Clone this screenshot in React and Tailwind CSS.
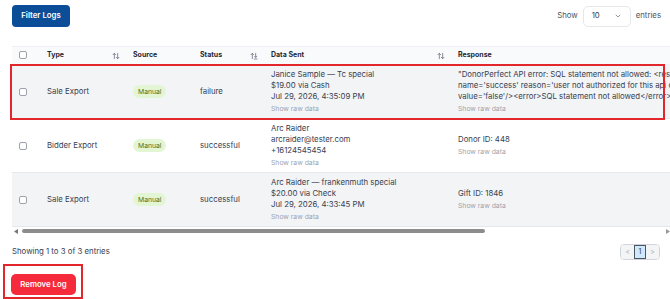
const rows = [
  {
    type: 'Sale Export',
    status: 'failure',
    sent: ['Janice Sample — Tc special', '$19.00 via Cash', 'Jul 29, 2026, 4:35:09 PM'],
    response: [
      '"DonorPerfect API error: SQL statement not allowed: <result><field',
      "name='success' reason='user not authorized for this api call'",
      "value='false'/><error>SQL statement not allowed</error></result>\"",
    ],
    bg: 'bg-[#f3f4f6]',
  },
  {
    type: 'Bidder Export',
    status: 'successful',
    sent: ['Arc Raider', 'arcraider@tester.com', '+16124545454'],
    response: ['Donor ID: 448'],
    bg: 'bg-white',
  },
  {
    type: 'Sale Export',
    status: 'successful',
    sent: ['Arc Raider — frankenmuth special', '$20.00 via Check', 'Jul 29, 2026, 4:33:45 PM'],
    response: ['Gift ID: 1846'],
    bg: 'bg-[#f3f4f6]',
  },
]

function Box() {
  return <span className="inline-block w-[8px] h-[8px] rounded-[2px] border border-[#9ca3af] bg-white align-middle" />
}

function SortIcon({ active }) {
  return (
    <svg width="8" height="8" viewBox="0 0 24 24" fill="none" stroke="#6b7280" strokeWidth="2.4" strokeLinecap="round" strokeLinejoin="round">
      <path d="m3 8 4-4 4 4" />
      <path d="M7 4v16" />
      {active ? (
        <>
          <path d="M17 4v12" />
          <path d="m14 13 3 3 3-3" />
          <path d="M13 21h8" />
        </>
      ) : (
        <>
          <path d="m21 16-4 4-4-4" />
          <path d="M17 20V4" />
        </>
      )}
    </svg>
  )
}

function RawLink() {
  return <p className="text-[6.8px] leading-[11px] text-[#9ca3af] mt-[1px]">Show raw data</p>
}

export default function App() {
  return (
    <div className="w-[670px] h-[299px] bg-white overflow-hidden pt-[5px] pl-3 text-[#374151]" style={{ fontFamily: 'Inter, "Noto Sans", sans-serif' }}>
      <div className="flex items-center justify-between pr-[9px]">
        <button className="h-[22px] w-[58px] rounded-[4px] bg-[#0b4d97] text-white text-[7.8px] font-semibold">Filter Logs</button>
        <div className="flex items-center gap-[5px] text-[7.8px] text-[#4b5563]">
          <span>Show</span>
          <div className="w-[48px] h-[21px] rounded-[5px] border border-[#e5e7eb] flex items-center justify-between px-[8px] text-[#374151]">
            <span>10</span>
            <svg width="8" height="8" viewBox="0 0 24 24" fill="none" stroke="#6b7280" strokeWidth="2.2" strokeLinecap="round" strokeLinejoin="round">
              <path d="m6 9 6 6 6-6" />
            </svg>
          </div>
          <span>entries</span>
        </div>
      </div>

      <div className="relative mt-[19px] w-[658px]">
        <div className="overflow-hidden w-[658px]">
          <table className="border-collapse table-fixed w-[900px] text-[7.8px]">
            <colgroup>
              <col className="w-[26px]" />
              <col className="w-[86px]" />
              <col className="w-[67px]" />
              <col className="w-[71px]" />
              <col className="w-[187px]" />
              <col className="w-[463px]" />
            </colgroup>
            <thead>
              <tr className="h-[18px] bg-[#f9fafb] border-t border-b border-[#eef0f3] text-[7px] font-semibold text-[#1f2937]">
                <th className="pl-[7px] text-left font-normal"><Box /></th>
                <th className="pl-[9px] pr-[4px] text-left">
                  <div className="flex items-center justify-between"><span>Type</span><SortIcon /></div>
                </th>
                <th className="pl-[9px] text-left">Source</th>
                <th className="pl-[9px] pr-[4px] text-left">
                  <div className="flex items-center justify-between"><span>Status</span><SortIcon active /></div>
                </th>
                <th className="pl-[9px] pr-[4px] text-left">
                  <div className="flex items-center justify-between"><span>Data Sent</span><SortIcon /></div>
                </th>
                <th className="pl-[9px] text-left">Response</th>
              </tr>
            </thead>
            <tbody>
              {rows.map((r, i) => (
                <tr key={i} className={`h-[54px] ${r.bg} border-b border-[#e5e7eb]`}>
                  <td className="pl-[7px] align-middle"><Box /></td>
                  <td className="pl-[9px] align-middle">{r.type}</td>
                  <td className="pl-[9px] align-middle">
                    <span className="inline-block px-[5px] py-[2.5px] rounded-full bg-[#e2f6d3] text-[#47712a] text-[6.8px] leading-[8px]">Manual</span>
                  </td>
                  <td className="pl-[9px] align-middle">{r.status}</td>
                  <td className="pl-[9px] align-middle leading-[11px] whitespace-nowrap">
                    {r.sent.map((s, j) => (
                      <p key={j}>{s}</p>
                    ))}
                    <RawLink />
                  </td>
                  <td className="pl-[9px] align-middle leading-[11px] whitespace-nowrap">
                    {r.response.map((s, j) => (
                      <p key={j}>{s}</p>
                    ))}
                    <RawLink />
                  </td>
                </tr>
              ))}
            </tbody>
          </table>
        </div>
        <div className="absolute left-[-2px] top-[18px] w-[655px] h-[56px] border-2 border-[#e3262b]" />

        <div className="h-[8px] flex items-center gap-[4px] bg-white">
          <svg width="4" height="5" viewBox="0 0 4 5" className="ml-[2px]"><path d="M4 0v5L0 2.5z" fill="#777" /></svg>
          <div className="h-[4px] w-[463px] rounded-full bg-[#8c8c8c]" />
          <div className="flex-1" />
          <svg width="4" height="5" viewBox="0 0 4 5"><path d="M0 0v5l4-2.5z" fill="#999" /></svg>
        </div>
      </div>

      <div className="flex items-center justify-between pr-[10px] mt-[9px]">
        <span className="text-[7.8px] text-[#374151]">Showing 1 to 3 of 3 entries</span>
        <div className="flex h-[16px] rounded-[4px] border border-[#d1d5db] text-[7px] text-[#9ca3af] overflow-hidden">
          <span className="w-[13px] flex items-center justify-center bg-[#f3f4f6]">&lt;</span>
          <span className="w-[12px] flex items-center justify-center bg-[#cde9fb] border border-[#4b5563] text-[#374151]">1</span>
          <span className="w-[13px] flex items-center justify-center bg-[#f3f4f6]">&gt;</span>
        </div>
      </div>

      <div className="inline-block mt-[4px] ml-[-9px] border-2 border-[#e3262b] pl-[6px] pr-[5px] pt-[3px] pb-[2px]">
        <button className="h-[21px] w-[65px] rounded-[5px] bg-[#f52a3a] text-white text-[7.8px] font-semibold">Remove Log</button>
      </div>
    </div>
  )
}
